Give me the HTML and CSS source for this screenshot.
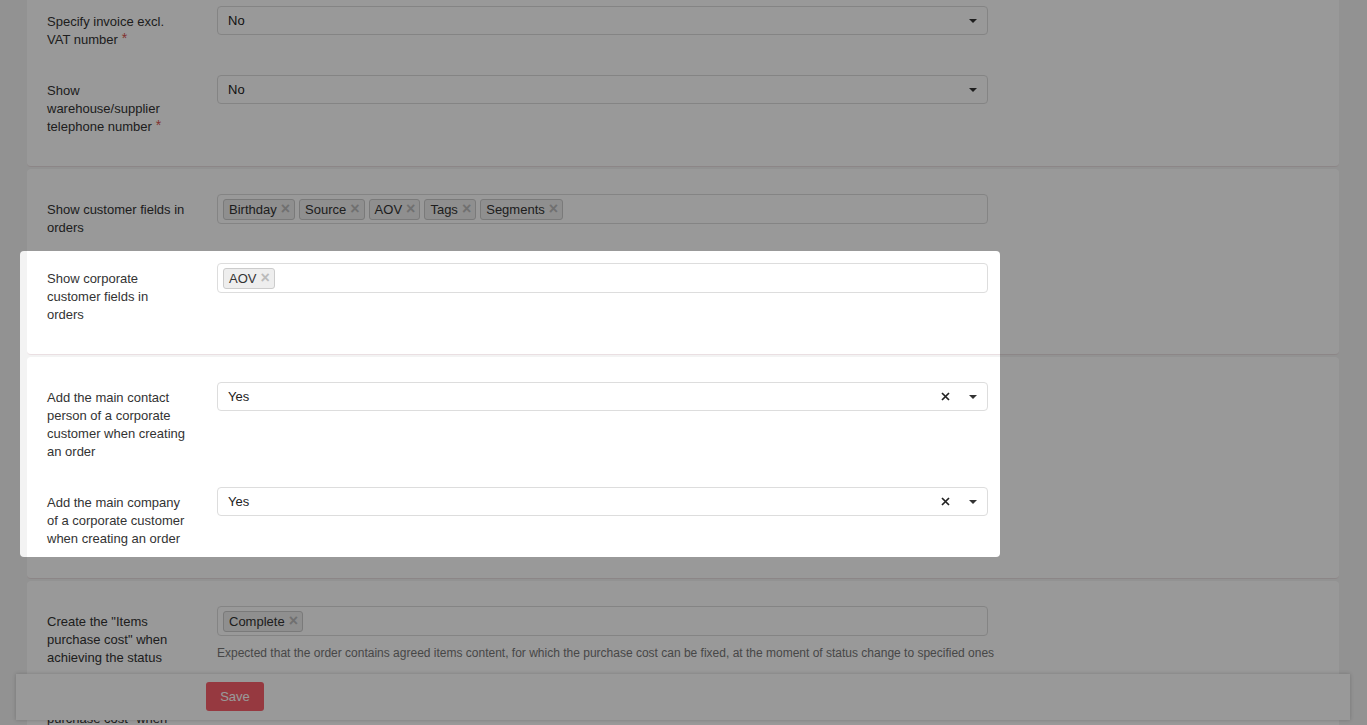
FILE: index.html
```html
<!DOCTYPE html>
<html lang="en">
<head>
    <meta charset="UTF-8">
    <title>Order settings</title>
    <link rel="stylesheet" href="styles.css">
</head>
<body>

<div class="page">

    <div class="card">
        <div class="row">
            <div class="label">Specify invoice excl. VAT number<span class="req">*</span></div>
            <div class="control">
                <div class="select">
                    <span class="value">No</span>
                    <span class="arrow"></span>
                </div>
            </div>
        </div>
        <div class="row">
            <div class="label">Show warehouse/supplier telephone number<span class="req">*</span></div>
            <div class="control">
                <div class="select">
                    <span class="value">No</span>
                    <span class="arrow"></span>
                </div>
            </div>
        </div>
    </div>

    <div class="card">
        <div class="row">
            <div class="label">Show customer fields in orders</div>
            <div class="control">
                <div class="tags">
                    <span class="tag">Birthday<span class="tag-x">×</span></span>
                    <span class="tag">Source<span class="tag-x">×</span></span>
                    <span class="tag">AOV<span class="tag-x">×</span></span>
                    <span class="tag">Tags<span class="tag-x">×</span></span>
                    <span class="tag">Segments<span class="tag-x">×</span></span>
                </div>
            </div>
        </div>
        <div class="row">
            <div class="label">Show corporate customer fields in orders</div>
            <div class="control">
                <div class="tags">
                    <span class="tag">AOV<span class="tag-x">×</span></span>
                </div>
            </div>
        </div>
    </div>

    <div class="card">
        <div class="row">
            <div class="label">Add the main contact person of a corporate customer when creating an order</div>
            <div class="control">
                <div class="select">
                    <span class="value">Yes</span>
                    <svg class="clear" width="9" height="9" viewBox="0 0 9 9"><path d="M1 1L8 8M8 1L1 8" stroke="#222" stroke-width="1.7"/></svg>
                    <span class="arrow"></span>
                </div>
            </div>
        </div>
        <div class="row">
            <div class="label">Add the main company of a corporate customer when creating an order</div>
            <div class="control">
                <div class="select">
                    <span class="value">Yes</span>
                    <svg class="clear" width="9" height="9" viewBox="0 0 9 9"><path d="M1 1L8 8M8 1L1 8" stroke="#222" stroke-width="1.7"/></svg>
                    <span class="arrow"></span>
                </div>
            </div>
        </div>
    </div>

    <div class="card">
        <div class="row has-help">
            <div class="label">Create the "Items purchase cost" when achieving the status</div>
            <div class="control">
                <div class="tags">
                    <span class="tag">Complete<span class="tag-x">×</span></span>
                </div>
                <div class="help">Expected that the order contains agreed items content, for which the purchase cost can be fixed, at the moment of status change to specified ones</div>
            </div>
        </div>
        <div class="row">
            <div class="label">Cancel the "Items purchase cost" when achieving the status</div>
            <div class="control">
                <div class="tags"></div>
            </div>
        </div>
    </div>

</div>

<div class="save-bar">
    <button class="save-btn">Save</button>
</div>

<div class="spotlight"></div>

</body>
</html>
```

FILE: styles.css
```css
* {
    box-sizing: border-box;
}

body {
    font-family: "Liberation Sans", Arial, sans-serif;
    font-size: 13px;
    color: #333;
    margin: 0;
    padding: 0 28px 0 27px;
    background-color: #f3f3f3;
    overflow: hidden;
}

/* page is scrolled a little, first card starts above the window */
.page {
    margin-top: -19px;
}

.card {
    background: #fff;
    border-radius: 4px;
    border-bottom: 1px solid #eadfe2;
    padding: 25px 20px 4px;
    margin-bottom: 2px;
}

.row {
    display: flex;
    gap: 31px;
    width: 941px;
    margin-bottom: 26px;
}

.row.has-help {
    margin-bottom: 18px;
}

.label {
    width: 139px;
    flex-shrink: 0;
    padding-top: 7px;
    line-height: 18px;
    color: #333;
}

.req {
    color: #d9534f;
    font-size: 14px;
    margin-left: 4px;
    vertical-align: top;
    line-height: 14px;
}

.control {
    flex: 1;
    min-width: 0;
}

.select {
    display: flex;
    align-items: center;
    height: 29px;
    padding: 0 10px 0 10px;
    border: 1px solid #ddd;
    border-radius: 4px;
    background: #fff;
}

.select .value {
    flex: 1;
    color: #222;
}

.clear {
    margin-right: 19px;
}

.arrow {
    width: 0;
    height: 0;
    border-top: 4px solid #333;
    border-left: 4px solid transparent;
    border-right: 4px solid transparent;
}

.tags {
    display: flex;
    align-items: center;
    gap: 4px;
    height: 30px;
    padding: 0 5px;
    border: 1px solid #ddd;
    border-radius: 4px;
    background: #fff;
}

.tag {
    display: inline-flex;
    align-items: center;
    height: 21px;
    padding: 0 4px 0 5px;
    border: 1px solid #ccc;
    border-radius: 3px;
    background: #eee;
    color: #333;
}

.tag-x {
    color: #bbb;
    font-weight: bold;
    font-size: 16px;
    margin-left: 4px;
}

.help {
    margin-top: 9px;
    font-size: 12px;
    line-height: 16px;
    color: #777;
    white-space: nowrap;
}

.save-bar {
    position: fixed;
    left: 16px;
    right: 17px;
    bottom: 5px;
    height: 46px;
    padding: 8px 0 0 190px;
    background: #fff;
    box-shadow: 0 0 4px rgba(0,0,0,0.2);
    z-index: 10;
}

.save-btn {
    width: 58px;
    height: 29px;
    border: none;
    border-radius: 3px;
    background: #fb5f6c;
    color: #fff;
    font-family: "Liberation Sans", Arial, sans-serif;
    font-size: 13px;
    cursor: pointer;
}

.spotlight {
    position: fixed;
    left: 20px;
    top: 251px;
    width: 980px;
    height: 306px;
    border-radius: 4px;
    box-shadow: 0 0 0 3000px rgba(0,0,0,0.4);
    pointer-events: none;
    z-index: 20;
}
```
